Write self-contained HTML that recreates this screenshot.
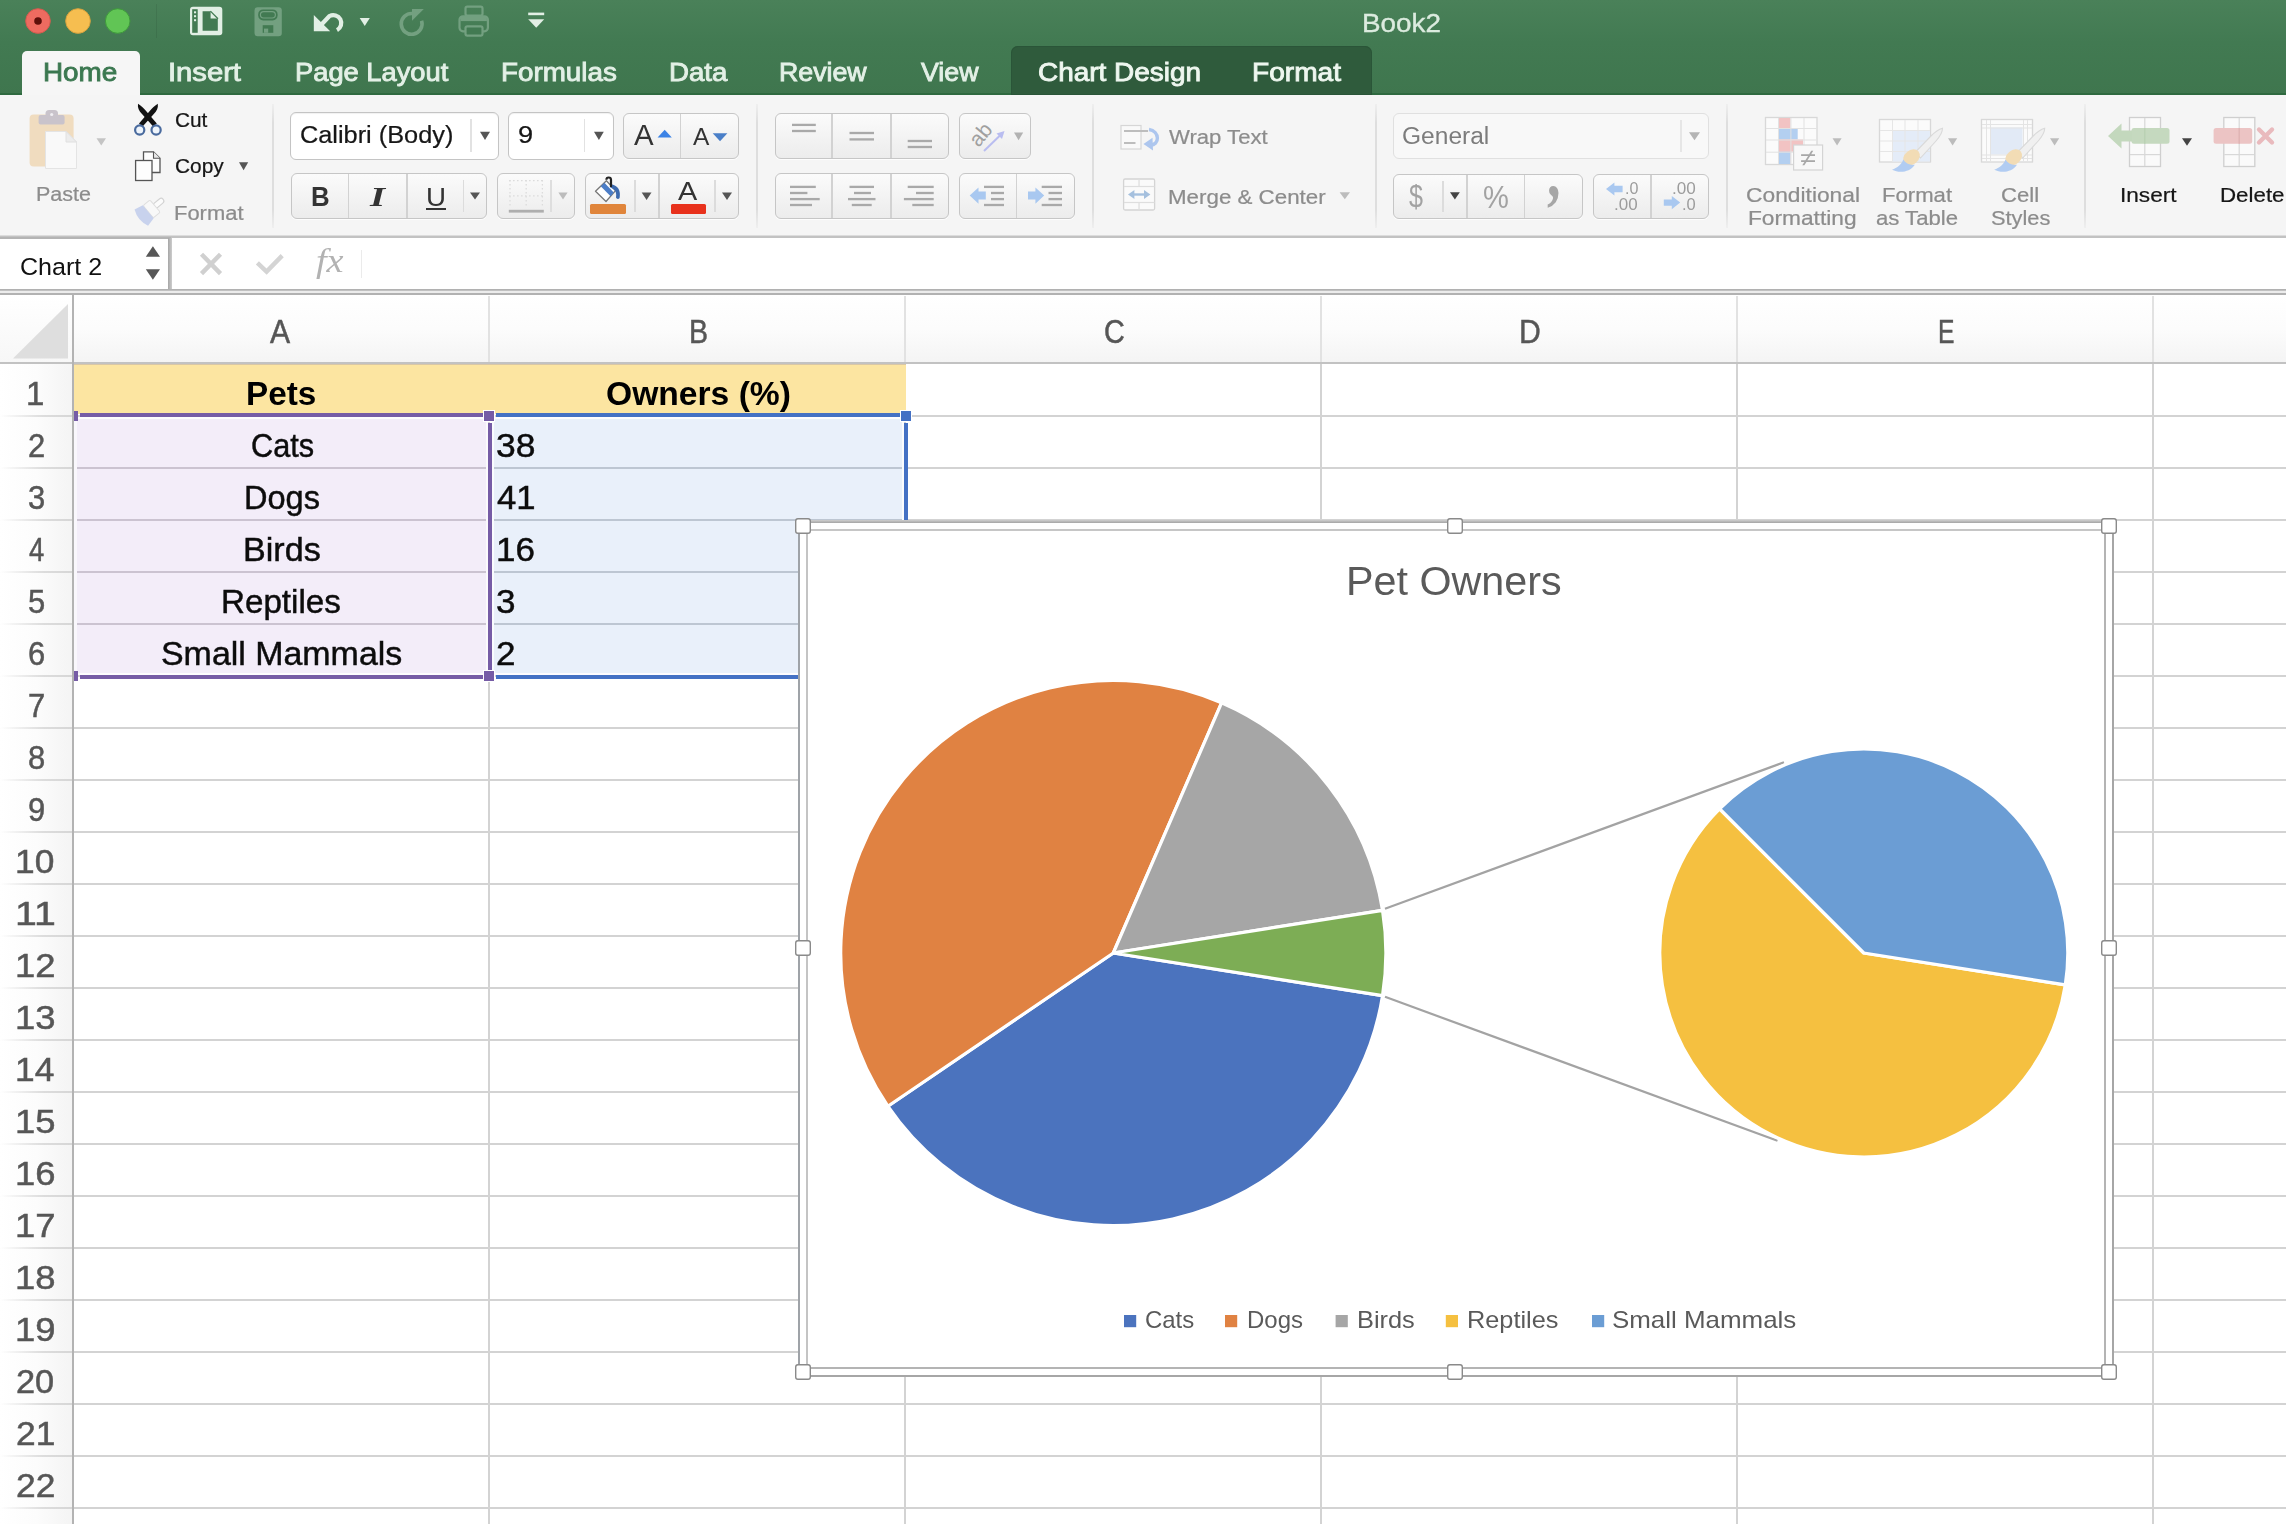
<!DOCTYPE html>
<html lang="en"><head><meta charset="utf-8"><title>Book2</title>
<style>
html,body{margin:0;padding:0}
body{width:2286px;height:1524px;position:relative;overflow:hidden;background:#fff;font-family:"Liberation Sans",sans-serif}
.t{position:absolute;white-space:nowrap;transform-origin:0 0;display:block}
.a{position:absolute}
svg{position:absolute;left:0;top:0;overflow:visible}

</style></head><body>
<div class="a" style="left:0px;top:0px;width:2286px;height:95px;background:linear-gradient(#4a8159 0,#427a52 45%,#3f764e 100%)"></div>
<div class="a" style="left:0px;top:93px;width:2286px;height:2px;background:#2f6a40"></div>
<div class="a" style="left:1011px;top:46px;width:361px;height:49px;background:#2f5b3c;border-radius:7px 7px 0 0;box-shadow:inset 0 0 0 1px #2a5538"></div>
<div class="a" style="left:22px;top:51px;width:118px;height:45px;background:#f6f6f6;border-radius:5px 5px 0 0"></div>
<div class="a" style="left:155.5px;top:4px;width:1.5px;height:34px;background:rgba(0,0,0,.08)"></div>
<div class="a" style="left:0px;top:95px;width:2286px;height:141px;background:#f5f5f5"></div>
<div class="a" style="left:0px;top:235px;width:2286px;height:1px;background:#dcdcdc"></div>
<div class="a" style="left:0px;top:236px;width:2286px;height:1.5px;background:#c2c2c2"></div>
<div class="a" style="left:271.8px;top:104px;width:2px;height:124px;background:linear-gradient(#efefef,#dedede 15%,#dedede 85%,#efefef)"></div>
<div class="a" style="left:755.5px;top:104px;width:2px;height:124px;background:linear-gradient(#efefef,#dedede 15%,#dedede 85%,#efefef)"></div>
<div class="a" style="left:1092px;top:104px;width:2px;height:124px;background:linear-gradient(#efefef,#dedede 15%,#dedede 85%,#efefef)"></div>
<div class="a" style="left:1374.6px;top:104px;width:2px;height:124px;background:linear-gradient(#efefef,#dedede 15%,#dedede 85%,#efefef)"></div>
<div class="a" style="left:1726.4px;top:104px;width:2px;height:124px;background:linear-gradient(#efefef,#dedede 15%,#dedede 85%,#efefef)"></div>
<div class="a" style="left:2083.7px;top:104px;width:2px;height:124px;background:linear-gradient(#efefef,#dedede 15%,#dedede 85%,#efefef)"></div>
<div class="a" style="left:290px;top:112px;width:209px;height:47.5px;background:#fff;border:1.5px solid #c4c4c4;border-radius:6px;box-sizing:border-box;box-shadow:inset 0 1px 1px rgba(0,0,0,.06)"></div>
<div class="a" style="left:470.25px;top:119px;width:1.5px;height:33px;background:#e2e2e2"></div>
<div class="a" style="left:508px;top:112px;width:105.5px;height:47.5px;background:#fff;border:1.5px solid #c4c4c4;border-radius:6px;box-sizing:border-box;box-shadow:inset 0 1px 1px rgba(0,0,0,.06)"></div>
<div class="a" style="left:583.95px;top:119px;width:1.5px;height:33px;background:#e2e2e2"></div>
<div class="a" style="left:623px;top:113px;width:116px;height:46px;background:linear-gradient(#fbfbfb,#ececec);border:1.5px solid #c6c6c6;border-radius:6px;box-sizing:border-box;box-shadow:0 1px 0 rgba(255,255,255,.8)"></div>
<div class="a" style="left:679.75px;top:114px;width:1.5px;height:44px;background:#d2d2d2"></div>
<div class="a" style="left:290.5px;top:173px;width:196.5px;height:46px;background:linear-gradient(#fbfbfb,#ececec);border:1.5px solid #c6c6c6;border-radius:6px;box-sizing:border-box;box-shadow:0 1px 0 rgba(255,255,255,.8)"></div>
<div class="a" style="left:347.65px;top:174px;width:1.5px;height:44px;background:#d2d2d2"></div>
<div class="a" style="left:406.45px;top:174px;width:1.5px;height:44px;background:#d2d2d2"></div>
<div class="a" style="left:462.75px;top:180px;width:1.5px;height:32px;background:#dcdcdc"></div>
<div class="a" style="left:497px;top:173px;width:77.5px;height:46px;background:linear-gradient(#fbfbfb,#ececec);border:1.5px solid #c6c6c6;border-radius:6px;box-sizing:border-box;box-shadow:0 1px 0 rgba(255,255,255,.8)"></div>
<div class="a" style="left:550.25px;top:180px;width:1.5px;height:32px;background:#dedede"></div>
<div class="a" style="left:585px;top:173px;width:154px;height:46px;background:linear-gradient(#fbfbfb,#ececec);border:1.5px solid #c6c6c6;border-radius:6px;box-sizing:border-box;box-shadow:0 1px 0 rgba(255,255,255,.8)"></div>
<div class="a" style="left:634.25px;top:180px;width:1.5px;height:32px;background:#dcdcdc"></div>
<div class="a" style="left:658.25px;top:174px;width:1.5px;height:44px;background:#d2d2d2"></div>
<div class="a" style="left:714.45px;top:180px;width:1.5px;height:32px;background:#dcdcdc"></div>
<div class="a" style="left:590px;top:204.4px;width:36px;height:9.2px;background:#e0853b;border-radius:1.5px"></div>
<div class="a" style="left:670.5px;top:204.4px;width:35.5px;height:9.2px;background:#e8311c;border-radius:1.5px"></div>
<div class="a" style="left:426px;top:207.6px;width:20px;height:2.4px;background:#333"></div>
<div class="a" style="left:775px;top:113px;width:174px;height:45.5px;background:linear-gradient(#fbfbfb,#ececec);border:1.5px solid #c6c6c6;border-radius:6px;box-sizing:border-box;box-shadow:0 1px 0 rgba(255,255,255,.8)"></div>
<div class="a" style="left:831.45px;top:114px;width:1.5px;height:43.5px;background:#d2d2d2"></div>
<div class="a" style="left:890.15px;top:114px;width:1.5px;height:43.5px;background:#d2d2d2"></div>
<div class="a" style="left:959px;top:113px;width:72px;height:45.5px;background:linear-gradient(#fbfbfb,#ececec);border:1.5px solid #c6c6c6;border-radius:6px;box-sizing:border-box;box-shadow:0 1px 0 rgba(255,255,255,.8)"></div>
<div class="a" style="left:775px;top:173px;width:174px;height:45.5px;background:linear-gradient(#fbfbfb,#ececec);border:1.5px solid #c6c6c6;border-radius:6px;box-sizing:border-box;box-shadow:0 1px 0 rgba(255,255,255,.8)"></div>
<div class="a" style="left:831.45px;top:174px;width:1.5px;height:43.5px;background:#d2d2d2"></div>
<div class="a" style="left:890.15px;top:174px;width:1.5px;height:43.5px;background:#d2d2d2"></div>
<div class="a" style="left:959px;top:173px;width:115.6px;height:45.5px;background:linear-gradient(#fbfbfb,#ececec);border:1.5px solid #c6c6c6;border-radius:6px;box-sizing:border-box;box-shadow:0 1px 0 rgba(255,255,255,.8)"></div>
<div class="a" style="left:1015.65px;top:174px;width:1.5px;height:43.5px;background:#d2d2d2"></div>
<div class="a" style="left:1392.5px;top:112.5px;width:316.5px;height:46.5px;background:#f8f8f8;border:1.5px solid #e0e0e0;border-radius:6px;box-sizing:border-box"></div>
<div class="a" style="left:1680.05px;top:120px;width:1.5px;height:32px;background:#e6e6e6"></div>
<div class="a" style="left:1392.5px;top:173.5px;width:190.5px;height:45.5px;background:linear-gradient(#fbfbfb,#ececec);border:1.5px solid #c6c6c6;border-radius:6px;box-sizing:border-box;box-shadow:0 1px 0 rgba(255,255,255,.8)"></div>
<div class="a" style="left:1466.25px;top:174.5px;width:1.5px;height:43.5px;background:#d2d2d2"></div>
<div class="a" style="left:1523.85px;top:174.5px;width:1.5px;height:43.5px;background:#d2d2d2"></div>
<div class="a" style="left:1442.05px;top:181px;width:1.5px;height:31px;background:#dcdcdc"></div>
<div class="a" style="left:1593.4px;top:173.5px;width:115.6px;height:45.5px;background:linear-gradient(#fbfbfb,#ececec);border:1.5px solid #c6c6c6;border-radius:6px;box-sizing:border-box;box-shadow:0 1px 0 rgba(255,255,255,.8)"></div>
<div class="a" style="left:1650.25px;top:174.5px;width:1.5px;height:43.5px;background:#d2d2d2"></div>
<div class="a" style="left:0px;top:237.5px;width:2286px;height:51.5px;background:#fff"></div>
<div class="a" style="left:0px;top:237px;width:171px;height:1.6px;background:#b4b4b4"></div>
<div class="a" style="left:168px;top:238px;width:3.6px;height:51px;background:linear-gradient(90deg,#a6a6a6,#cdcdcd)"></div>
<div class="a" style="left:360.6px;top:249.5px;width:1.8px;height:28.5px;background:#ebebeb"></div>
<div class="a" style="left:0px;top:288.8px;width:2286px;height:2px;background:linear-gradient(#a9a9a9,#c9c9c9)"></div>
<div class="a" style="left:0px;top:290.8px;width:2286px;height:2.4px;background:#ececec"></div>
<div class="a" style="left:0px;top:293.2px;width:2286px;height:1.8px;background:#b2b2b2"></div>
<div class="a" style="left:0px;top:295px;width:2286px;height:68px;background:linear-gradient(#ffffff 0,#fcfcfc 50%,#f4f4f4 100%)"></div>
<div class="a" style="left:0px;top:363px;width:73px;height:1161px;background:linear-gradient(90deg,#ffffff 0,#fcfcfc 50%,#f4f4f4 100%)"></div>
<div class="a" style="left:0px;top:295px;width:73px;height:68px;background:linear-gradient(#fff,#f7f7f7)"></div>
<svg width="80" height="70" style="left:0;top:295px"><polygon points="68,9 68,63.5 13,63.5" fill="#dedede"/></svg>
<div class="a" style="left:488px;top:296px;width:2px;height:66px;background:#e2e2e2"></div>
<div class="a" style="left:488px;top:364px;width:2px;height:1160px;background:#d3d3d3"></div>
<div class="a" style="left:904px;top:296px;width:2px;height:66px;background:#e2e2e2"></div>
<div class="a" style="left:904px;top:364px;width:2px;height:1160px;background:#d3d3d3"></div>
<div class="a" style="left:1320px;top:296px;width:2px;height:66px;background:#e2e2e2"></div>
<div class="a" style="left:1320px;top:364px;width:2px;height:1160px;background:#d3d3d3"></div>
<div class="a" style="left:1736px;top:296px;width:2px;height:66px;background:#e2e2e2"></div>
<div class="a" style="left:1736px;top:364px;width:2px;height:1160px;background:#d3d3d3"></div>
<div class="a" style="left:2152px;top:296px;width:2px;height:66px;background:#e2e2e2"></div>
<div class="a" style="left:2152px;top:364px;width:2px;height:1160px;background:#d3d3d3"></div>
<div class="a" style="left:73px;top:415px;width:2213px;height:2px;background:#d3d3d3"></div>
<div class="a" style="left:0px;top:415px;width:73px;height:2px;background:linear-gradient(90deg,rgba(225,225,225,0),#dcdcdc 60%,#d6d6d6)"></div>
<div class="a" style="left:73px;top:467px;width:2213px;height:2px;background:#d3d3d3"></div>
<div class="a" style="left:0px;top:467px;width:73px;height:2px;background:linear-gradient(90deg,rgba(225,225,225,0),#dcdcdc 60%,#d6d6d6)"></div>
<div class="a" style="left:73px;top:519px;width:2213px;height:2px;background:#d3d3d3"></div>
<div class="a" style="left:0px;top:519px;width:73px;height:2px;background:linear-gradient(90deg,rgba(225,225,225,0),#dcdcdc 60%,#d6d6d6)"></div>
<div class="a" style="left:73px;top:571px;width:2213px;height:2px;background:#d3d3d3"></div>
<div class="a" style="left:0px;top:571px;width:73px;height:2px;background:linear-gradient(90deg,rgba(225,225,225,0),#dcdcdc 60%,#d6d6d6)"></div>
<div class="a" style="left:73px;top:623px;width:2213px;height:2px;background:#d3d3d3"></div>
<div class="a" style="left:0px;top:623px;width:73px;height:2px;background:linear-gradient(90deg,rgba(225,225,225,0),#dcdcdc 60%,#d6d6d6)"></div>
<div class="a" style="left:73px;top:675px;width:2213px;height:2px;background:#d3d3d3"></div>
<div class="a" style="left:0px;top:675px;width:73px;height:2px;background:linear-gradient(90deg,rgba(225,225,225,0),#dcdcdc 60%,#d6d6d6)"></div>
<div class="a" style="left:73px;top:727px;width:2213px;height:2px;background:#d3d3d3"></div>
<div class="a" style="left:0px;top:727px;width:73px;height:2px;background:linear-gradient(90deg,rgba(225,225,225,0),#dcdcdc 60%,#d6d6d6)"></div>
<div class="a" style="left:73px;top:779px;width:2213px;height:2px;background:#d3d3d3"></div>
<div class="a" style="left:0px;top:779px;width:73px;height:2px;background:linear-gradient(90deg,rgba(225,225,225,0),#dcdcdc 60%,#d6d6d6)"></div>
<div class="a" style="left:73px;top:831px;width:2213px;height:2px;background:#d3d3d3"></div>
<div class="a" style="left:0px;top:831px;width:73px;height:2px;background:linear-gradient(90deg,rgba(225,225,225,0),#dcdcdc 60%,#d6d6d6)"></div>
<div class="a" style="left:73px;top:883px;width:2213px;height:2px;background:#d3d3d3"></div>
<div class="a" style="left:0px;top:883px;width:73px;height:2px;background:linear-gradient(90deg,rgba(225,225,225,0),#dcdcdc 60%,#d6d6d6)"></div>
<div class="a" style="left:73px;top:935px;width:2213px;height:2px;background:#d3d3d3"></div>
<div class="a" style="left:0px;top:935px;width:73px;height:2px;background:linear-gradient(90deg,rgba(225,225,225,0),#dcdcdc 60%,#d6d6d6)"></div>
<div class="a" style="left:73px;top:987px;width:2213px;height:2px;background:#d3d3d3"></div>
<div class="a" style="left:0px;top:987px;width:73px;height:2px;background:linear-gradient(90deg,rgba(225,225,225,0),#dcdcdc 60%,#d6d6d6)"></div>
<div class="a" style="left:73px;top:1039px;width:2213px;height:2px;background:#d3d3d3"></div>
<div class="a" style="left:0px;top:1039px;width:73px;height:2px;background:linear-gradient(90deg,rgba(225,225,225,0),#dcdcdc 60%,#d6d6d6)"></div>
<div class="a" style="left:73px;top:1091px;width:2213px;height:2px;background:#d3d3d3"></div>
<div class="a" style="left:0px;top:1091px;width:73px;height:2px;background:linear-gradient(90deg,rgba(225,225,225,0),#dcdcdc 60%,#d6d6d6)"></div>
<div class="a" style="left:73px;top:1143px;width:2213px;height:2px;background:#d3d3d3"></div>
<div class="a" style="left:0px;top:1143px;width:73px;height:2px;background:linear-gradient(90deg,rgba(225,225,225,0),#dcdcdc 60%,#d6d6d6)"></div>
<div class="a" style="left:73px;top:1195px;width:2213px;height:2px;background:#d3d3d3"></div>
<div class="a" style="left:0px;top:1195px;width:73px;height:2px;background:linear-gradient(90deg,rgba(225,225,225,0),#dcdcdc 60%,#d6d6d6)"></div>
<div class="a" style="left:73px;top:1247px;width:2213px;height:2px;background:#d3d3d3"></div>
<div class="a" style="left:0px;top:1247px;width:73px;height:2px;background:linear-gradient(90deg,rgba(225,225,225,0),#dcdcdc 60%,#d6d6d6)"></div>
<div class="a" style="left:73px;top:1299px;width:2213px;height:2px;background:#d3d3d3"></div>
<div class="a" style="left:0px;top:1299px;width:73px;height:2px;background:linear-gradient(90deg,rgba(225,225,225,0),#dcdcdc 60%,#d6d6d6)"></div>
<div class="a" style="left:73px;top:1351px;width:2213px;height:2px;background:#d3d3d3"></div>
<div class="a" style="left:0px;top:1351px;width:73px;height:2px;background:linear-gradient(90deg,rgba(225,225,225,0),#dcdcdc 60%,#d6d6d6)"></div>
<div class="a" style="left:73px;top:1403px;width:2213px;height:2px;background:#d3d3d3"></div>
<div class="a" style="left:0px;top:1403px;width:73px;height:2px;background:linear-gradient(90deg,rgba(225,225,225,0),#dcdcdc 60%,#d6d6d6)"></div>
<div class="a" style="left:73px;top:1455px;width:2213px;height:2px;background:#d3d3d3"></div>
<div class="a" style="left:0px;top:1455px;width:73px;height:2px;background:linear-gradient(90deg,rgba(225,225,225,0),#dcdcdc 60%,#d6d6d6)"></div>
<div class="a" style="left:73px;top:1507px;width:2213px;height:2px;background:#d3d3d3"></div>
<div class="a" style="left:0px;top:1507px;width:73px;height:2px;background:linear-gradient(90deg,rgba(225,225,225,0),#dcdcdc 60%,#d6d6d6)"></div>
<div class="a" style="left:0px;top:362px;width:2286px;height:2px;background:#c2c2c2"></div>
<div class="a" style="left:72px;top:295px;width:2px;height:1229px;background:#b3b3b3"></div>
<div class="a" style="left:74px;top:364px;width:832px;height:49.5px;background:#fce5a1"></div>
<div class="a" style="left:74px;top:364px;width:832px;height:1px;background:#d9c7a6"></div>
<div class="a" style="left:74px;top:417px;width:414px;height:258px;background:#f3edf9"></div>
<div class="a" style="left:492px;top:417px;width:412px;height:258px;background:#e9f0fa"></div>
<div class="a" style="left:74px;top:467px;width:414px;height:2px;background:#cbc3d1"></div>
<div class="a" style="left:492px;top:467px;width:412px;height:2px;background:#bdc6d2"></div>
<div class="a" style="left:74px;top:519px;width:414px;height:2px;background:#cbc3d1"></div>
<div class="a" style="left:492px;top:519px;width:412px;height:2px;background:#bdc6d2"></div>
<div class="a" style="left:74px;top:571px;width:414px;height:2px;background:#cbc3d1"></div>
<div class="a" style="left:492px;top:571px;width:412px;height:2px;background:#bdc6d2"></div>
<div class="a" style="left:74px;top:623px;width:414px;height:2px;background:#cbc3d1"></div>
<div class="a" style="left:492px;top:623px;width:412px;height:2px;background:#bdc6d2"></div>
<div class="a" style="left:74px;top:417px;width:830px;height:1.8px;background:#fdfcfe"></div>
<div class="a" style="left:74px;top:673.2px;width:724px;height:1.8px;background:#fdfcfe"></div>
<div class="a" style="left:74px;top:417px;width:3px;height:258px;background:#f9f7fc"></div>
<div class="a" style="left:486.4px;top:419px;width:1.6px;height:254px;background:#fbfafd"></div>
<div class="a" style="left:492px;top:419px;width:1.6px;height:254px;background:#fafcfe"></div>
<div class="a" style="left:902.4px;top:419px;width:1.6px;height:101px;background:#fafcfe"></div>
<div class="a" style="left:80px;top:413px;width:403px;height:4px;background:#765ca6"></div>
<div class="a" style="left:80px;top:675px;width:403px;height:3.8px;background:#765ca6"></div>
<div class="a" style="left:488px;top:423px;width:4px;height:247px;background:#765ca6"></div>
<div class="a" style="left:74px;top:411px;width:4px;height:10px;background:#765ca6"></div>
<div class="a" style="left:74px;top:671px;width:4px;height:10px;background:#765ca6"></div>
<div class="a" style="left:483px;top:410px;width:12px;height:12px;background:#fff"></div>
<div class="a" style="left:484px;top:411px;width:10px;height:10px;background:#765ca6"></div>
<div class="a" style="left:483px;top:670px;width:12px;height:12px;background:#fff"></div>
<div class="a" style="left:484px;top:671px;width:10px;height:10px;background:#765ca6"></div>
<div class="a" style="left:496px;top:413px;width:404px;height:4px;background:#4471c4"></div>
<div class="a" style="left:496px;top:675px;width:302px;height:3.8px;background:#4471c4"></div>
<div class="a" style="left:904px;top:423px;width:4px;height:97.5px;background:#4471c4"></div>
<div class="a" style="left:900px;top:410px;width:12px;height:12px;background:#fff"></div>
<div class="a" style="left:901px;top:411px;width:10px;height:10px;background:#4471c4"></div>
<div class="a" style="left:799px;top:521px;width:1314px;height:855px;background:#fff"></div>
<div class="a" style="left:798px;top:519.5px;width:1316px;height:3.2px;background:linear-gradient(#cfcfcf,#a4a4a4)"></div>
<div class="a" style="left:798px;top:1374.6px;width:1316px;height:2.4px;background:#a6a6a6"></div>
<div class="a" style="left:798px;top:521px;width:2.2px;height:855px;background:#9fa3a8"></div>
<div class="a" style="left:2111.9px;top:521px;width:2.2px;height:855px;background:#a6a6a6"></div>
<div class="a" style="left:806px;top:529.2px;width:1300px;height:1.8px;background:#c6c6c6"></div>
<div class="a" style="left:806px;top:1367px;width:1300px;height:1.9px;background:#b4b4b4"></div>
<div class="a" style="left:806px;top:530px;width:1.9px;height:838px;background:#c4c4c4"></div>
<div class="a" style="left:2104px;top:530px;width:1.9px;height:838px;background:#b4b4b4"></div>
<svg width="2286" height="1524" viewBox="0 0 2286 1524">
<line x1="1385" y1="908.8" x2="1784" y2="762.3" stroke="#a3a3a3" stroke-width="2.2"/>
<line x1="1385" y1="996.8" x2="1777.5" y2="1140.8" stroke="#a3a3a3" stroke-width="2.2"/>
<path d="M1113.30 953.00 L1382.54 995.64 A272.60 272.60 0 0 1 887.84 1106.22 Z" fill="#4b73be" stroke="#fff" stroke-width="3.2" stroke-linejoin="round"/>
<path d="M1113.30 953.00 L887.84 1106.22 A272.60 272.60 0 0 1 1221.56 702.82 Z" fill="#e08242" stroke="#fff" stroke-width="3.2" stroke-linejoin="round"/>
<path d="M1113.30 953.00 L1221.56 702.82 A272.60 272.60 0 0 1 1382.54 910.36 Z" fill="#a6a6a6" stroke="#fff" stroke-width="3.2" stroke-linejoin="round"/>
<path d="M1113.30 953.00 L1382.54 910.36 A272.60 272.60 0 0 1 1382.54 995.64 Z" fill="#7dad55" stroke="#fff" stroke-width="3.2" stroke-linejoin="round"/>
<path d="M1863.80 953.00 L2065.29 984.91 A204.00 204.00 0 1 1 1719.55 808.75 Z" fill="#f5c040" stroke="#fff" stroke-width="3.2" stroke-linejoin="round"/>
<path d="M1863.80 953.00 L1719.55 808.75 A204.00 204.00 0 0 1 2065.29 984.91 Z" fill="#6b9dd4" stroke="#fff" stroke-width="3.2" stroke-linejoin="round"/>
<rect x="1124" y="1315" width="12.2" height="12.2" fill="#4b73be"/>
<rect x="1225" y="1315" width="12.2" height="12.2" fill="#e08242"/>
<rect x="1335.6" y="1315" width="12.2" height="12.2" fill="#a6a6a6"/>
<rect x="1445.8" y="1315" width="12.2" height="12.2" fill="#f5c040"/>
<rect x="1592" y="1315" width="12.2" height="12.2" fill="#6b9dd4"/>
<rect x="795.7" y="518.7" width="14.6" height="14.6" rx="2.2" fill="#fff" stroke="#8a8a8a" stroke-width="1.4"/>
<rect x="1447.7" y="518.7" width="14.6" height="14.6" rx="2.2" fill="#fff" stroke="#8a8a8a" stroke-width="1.4"/>
<rect x="2101.7" y="518.7" width="14.6" height="14.6" rx="2.2" fill="#fff" stroke="#8a8a8a" stroke-width="1.4"/>
<rect x="795.7" y="940.7" width="14.6" height="14.6" rx="2.2" fill="#fff" stroke="#8a8a8a" stroke-width="1.4"/>
<rect x="2101.7" y="940.7" width="14.6" height="14.6" rx="2.2" fill="#fff" stroke="#8a8a8a" stroke-width="1.4"/>
<rect x="795.7" y="1364.7" width="14.6" height="14.6" rx="2.2" fill="#fff" stroke="#8a8a8a" stroke-width="1.4"/>
<rect x="1447.7" y="1364.7" width="14.6" height="14.6" rx="2.2" fill="#fff" stroke="#8a8a8a" stroke-width="1.4"/>
<rect x="2101.7" y="1364.7" width="14.6" height="14.6" rx="2.2" fill="#fff" stroke="#8a8a8a" stroke-width="1.4"/>
</svg>
<svg width="2286" height="300" viewBox="0 0 2286 300">
<circle cx="38" cy="21" r="12.3" fill="#ee6b60" stroke="#d55a4e" stroke-width="1"/><circle cx="38" cy="21" r="3.8" fill="#5e0f0a"/>
<circle cx="78" cy="21" r="12.3" fill="#f6be50" stroke="#d8a23e" stroke-width="1"/>
<circle cx="117.7" cy="21" r="12.3" fill="#61c555" stroke="#3f9a3c" stroke-width="1"/>
<rect x="190" y="6.8" width="32.3" height="28.4" rx="3" fill="#e2efe5"/>
<rect x="192.2" y="9.2" width="5.5" height="23.6" fill="#427a52"/>
<rect x="194" y="11.3" width="2.1" height="2" fill="#e2efe5"/>
<rect x="194" y="15.2" width="2.1" height="2" fill="#e2efe5"/>
<rect x="194" y="19.2" width="2.1" height="2" fill="#e2efe5"/>
<path d="M202.6 11.3 H210.6 V18.5 H217.8 V30.7 H202.6 Z" fill="#427a52"/>
<path d="M210.4 11.1 L218 18.7" stroke="#427a52" stroke-width="1.3"/>
<rect x="254.5" y="7.3" width="27.3" height="28.9" rx="3.2" fill="#73a080"/>
<rect x="258.2" y="9.4" width="19.4" height="11" rx="5" fill="#427a52"/>
<rect x="260.4" y="11.6" width="15" height="6.4" rx="3.2" fill="none" stroke="#73a080" stroke-width="1.2"/>
<rect x="262.7" y="25.2" width="10.6" height="7.6" fill="#427a52"/><rect x="264" y="28.6" width="4.2" height="4.2" fill="#73a080"/>
<polygon points="313.8,15 313.8,31.3 330.2,31.3" fill="#e2efe5"/>
<path d="M321.5 24.5 L329.5 16 A7.6 7.6 0 1 1 337 30.2" fill="none" stroke="#e2efe5" stroke-width="4.2"/>
<polygon points="359.7,18 369.8,18 364.75,25.9" fill="#e2efe5"/>
<path d="M412.5 13.5 A10.4 10.4 0 1 0 421.6 20.8" fill="none" stroke="#73a080" stroke-width="3.6"/>
<polygon points="412,9 423.8,9 412,20.8" fill="#73a080"/>
<rect x="465.5" y="6.6" width="17" height="9" rx="1.8" fill="none" stroke="#73a080" stroke-width="2.2"/>
<rect x="459.5" y="16.3" width="28.4" height="15" rx="3.5" fill="none" stroke="#73a080" stroke-width="2.2"/>
<rect x="460.5" y="16.3" width="26.4" height="4.8" fill="#73a080"/>
<rect x="465.5" y="26.3" width="17" height="9.3" rx="1.8" fill="#427a52" stroke="#73a080" stroke-width="2.2"/>
<rect x="528.2" y="12.6" width="16" height="2.6" fill="#e2efe5"/><polygon points="528.2,19.2 544.2,19.2 536.2,27.8" fill="#e2efe5"/>
<rect x="29.6" y="114.5" width="44" height="52" rx="4" fill="#f0dcbf"/>
<rect x="38.6" y="115" width="26" height="9.5" rx="2" fill="#c9c3cb"/><rect x="45.5" y="110" width="12.5" height="8" rx="3.5" fill="#c9c3cb"/><circle cx="51.7" cy="114.5" r="1.6" fill="#f0eef2"/>
<path d="M45.5 131.5 H66 L76.5 142 V168.5 H45.5 Z" fill="#f9f9f9" stroke="#e4e4e4" stroke-width="1"/><path d="M66 131.5 V142 H76.5 Z" fill="#ececec" stroke="#e0e0e0" stroke-width="1"/>
<polygon points="96.5,138.3 106,138.3 101.25,145.5" fill="#c4c4c4"/>
<path d="M138 103.8 C137.4 108 139 111 142 114 L153.2 126.6 L156.8 123.6 L146.5 111.5 C143.8 108.3 141.5 106 138 103.8 Z" fill="#111"/>
<path d="M157.8 103.8 C158.4 108 156.8 111 153.8 114 L142.6 126.6 L139 123.6 L149.3 111.5 C152 108.3 154.3 106 157.8 103.8 Z" fill="#111"/>
<circle cx="139.7" cy="130" r="4.6" fill="#eef4fb" stroke="#4a6b9e" stroke-width="2.2"/><circle cx="156.1" cy="130" r="4.6" fill="#eef4fb" stroke="#4a6b9e" stroke-width="2.2"/>
<path d="M143.5 151.8 H153.5 L160 158.3 V172.5 H143.5 Z" fill="#fdfdfd" stroke="#555" stroke-width="1.3"/><path d="M153.5 151.8 V158.3 H160" fill="#e8e8e8" stroke="#555" stroke-width="1.1"/>
<rect x="135.6" y="160.5" width="16.4" height="20" fill="#fdfdfd" stroke="#555" stroke-width="1.3"/>
<polygon points="239,162.2 248.2,162.2 243.6,170.3" fill="#555"/>
<g transform="translate(148.6 211.5) rotate(50)"><rect x="-2.7" y="-19" width="5.4" height="12" rx="2.7" fill="#fbfbfb" stroke="#d2d2d2" stroke-width="1.1"/><rect x="-8" y="-8.5" width="16" height="9" rx="1.5" fill="#f8f8f8" stroke="#dedede" stroke-width="1"/><path d="M-8.5 0.5 H8.5 L10.5 9.5 Q0 14.5 -10.5 9.5 Z" fill="#c8d2ed"/></g>
<polygon points="480,131.7 490,131.7 485,139.9" fill="#555"/>
<polygon points="594,131.7 603.8,131.7 598.9,139.9" fill="#555"/>
<polygon points="470,192.4 480,192.4 475,199.6" fill="#555"/>
<polygon points="558.4,192.4 567.6,192.4 563,199.6" fill="#bcbcbc"/>
<polygon points="641.7,192.4 651.5,192.4 646.6,200" fill="#555"/>
<polygon points="722,192.4 732,192.4 727,200" fill="#555"/>
<polygon points="657.6,137.6 671.8,137.6 664.7,129.8" fill="#3c83e6"/>
<polygon points="712.7,133.2 727.4,133.2 720.05,141.2" fill="#4a7fc8"/>
<g stroke="#dcdcdc" stroke-width="1.3" stroke-dasharray="1.6 2.4"><line x1="510" y1="180" x2="510" y2="208"/><line x1="526.2" y1="180" x2="526.2" y2="208"/><line x1="542.4" y1="180" x2="542.4" y2="208"/><line x1="509" y1="180.6" x2="543.4" y2="180.6"/><line x1="509" y1="195.8" x2="543.4" y2="195.8"/></g><rect x="508.8" y="209.8" width="35" height="2.8" fill="#aeaeae"/>
<polygon points="595.5,191.3 606.4,180.8 615.5,190.6 606,201.5" fill="#fff" stroke="#777" stroke-width="1.3" stroke-linejoin="round"/>
<polygon points="604.4,182.7 613.8,192.6 610.6,196.3 600.7,186.3" fill="#4c7dc6"/>
<path d="M611.5 184.2 C618 185.5 621 190.5 619.6 198 C618.6 199.4 616.6 199.2 616 197.6 C616.8 192.6 615.6 189.8 610 187.2 Z" fill="#3d6aae"/>
<path d="M611 187 V179.8 a2.3 2.3 0 1 0 -4.6 0" fill="none" stroke="#222" stroke-width="2.2"/>
<rect x="792" y="123.75" width="23.8" height="2.3" fill="#a9a9a9"/>
<rect x="792" y="129.85" width="23.8" height="2.3" fill="#a9a9a9"/>
<rect x="849.5" y="131.85" width="24.5" height="2.3" fill="#a9a9a9"/>
<rect x="849.5" y="138.25" width="24.5" height="2.3" fill="#a9a9a9"/>
<rect x="907.7" y="139.85" width="24.3" height="2.3" fill="#a9a9a9"/>
<rect x="907.7" y="145.85" width="24.3" height="2.3" fill="#a9a9a9"/>
<rect x="790" y="185.75" width="25.8" height="2.3" fill="#a9a9a9"/>
<rect x="790" y="191.85" width="17.4" height="2.3" fill="#a9a9a9"/>
<rect x="790" y="197.95" width="29.7" height="2.3" fill="#a9a9a9"/>
<rect x="790" y="203.85" width="22" height="2.3" fill="#a9a9a9"/>
<rect x="849.5" y="185.75" width="24.5" height="2.3" fill="#a9a9a9"/>
<rect x="854" y="191.85" width="17" height="2.3" fill="#a9a9a9"/>
<rect x="848" y="197.95" width="27.5" height="2.3" fill="#a9a9a9"/>
<rect x="851.8" y="203.85" width="19.9" height="2.3" fill="#a9a9a9"/>
<rect x="907.7" y="185.75" width="26" height="2.3" fill="#a9a9a9"/>
<rect x="916" y="191.85" width="17.7" height="2.3" fill="#a9a9a9"/>
<rect x="903.9" y="197.95" width="29.8" height="2.3" fill="#a9a9a9"/>
<rect x="912.3" y="203.85" width="21.4" height="2.3" fill="#a9a9a9"/>
<text x="0" y="0" transform="translate(978.5 148) rotate(-50)" font-family="Liberation Sans,sans-serif" font-size="21" fill="#a0a0a0">ab</text>
<path d="M984 151 L1001 134.5" stroke="#b9bdf0" stroke-width="2" fill="none"/><polygon points="1004.5,131 996.5,133.5 1002,139" fill="#b9bdf0"/>
<polygon points="1014,132.6 1023.2,132.6 1018.6,140.2" fill="#b2b2b2"/>
<polygon points="969.7,195.6 978.5,187.4 978.5,191.6 985.8,191.6 985.8,199.6 978.5,199.6 978.5,203.8" fill="#a9c8f0"/>
<rect x="984" y="185.75" width="20" height="2.3" fill="#a9a9a9"/>
<rect x="991" y="191.85" width="13" height="2.3" fill="#a9a9a9"/>
<rect x="991" y="197.95" width="13" height="2.3" fill="#a9a9a9"/>
<rect x="984" y="203.85" width="20" height="2.3" fill="#a9a9a9"/>
<polygon points="1044.2,195.6 1035.4,187.4 1035.4,191.6 1028,191.6 1028,199.6 1035.4,199.6 1035.4,203.8" fill="#a9c8f0"/>
<rect x="1041.7" y="185.75" width="20.3" height="2.3" fill="#a9a9a9"/>
<rect x="1048.5" y="191.85" width="13.5" height="2.3" fill="#a9a9a9"/>
<rect x="1048.5" y="197.95" width="13.5" height="2.3" fill="#a9a9a9"/>
<rect x="1041.7" y="203.85" width="20.3" height="2.3" fill="#a9a9a9"/>
<rect x="1121" y="125.5" width="20" height="23.5" fill="#f9f9f9" stroke="#d6d6d6" stroke-width="1.2"/>
<rect x="1124" y="130" width="24" height="2" fill="#bdbdbd"/>
<rect x="1124" y="142" width="11.5" height="2" fill="#bdbdbd"/>
<path d="M1149 129.5 C1160 131 1160 145.5 1150 145" fill="none" stroke="#adc6ee" stroke-width="3.4"/><polygon points="1143.5,144 1152.5,137.8 1153,150.6" fill="#adc6ee"/>
<rect x="1123.6" y="179" width="31" height="31" rx="1.5" fill="#fafafa" stroke="#d4d4d4" stroke-width="1.3"/>
<rect x="1124" y="185.9" width="30.5" height="1.2" fill="#dedede"/>
<rect x="1124" y="201.9" width="30.5" height="1.2" fill="#dedede"/>
<rect x="1138.4" y="179" width="1.3" height="7.5" fill="#dedede"/><rect x="1138.4" y="202.5" width="1.3" height="7.5" fill="#dedede"/>
<path d="M1132 194.5 H1147" stroke="#a5c0de" stroke-width="2.4"/><polygon points="1128,194.5 1134.4,190 1134.4,199" fill="#a5c0de"/><polygon points="1150.4,194.5 1144,190 1144,199" fill="#a5c0de"/>
<polygon points="1339.6,192.2 1350,192.2 1344.8,199.2" fill="#bcbcbc"/>
<polygon points="1689,132.2 1700,132.2 1694.5,140.2" fill="#b4b4b4"/>
<polygon points="1450,192.2 1459.8,192.2 1454.9,199.6" fill="#444"/>
<polygon points="1606,189 1614.4,182.4 1614.4,185.8 1622.6,185.8 1622.6,192.2 1614.4,192.2 1614.4,195.6" fill="#a9c8f0"/>
<polygon points="1680.2,202.6 1671.8,196 1671.8,199.4 1663.8,199.4 1663.8,205.8 1671.8,205.8 1671.8,209.2" fill="#a9c8f0"/>
<rect x="1765.5" y="117.5" width="51.5" height="47" fill="#fbfbfb" stroke="#d8d8d8" stroke-width="1.3"/><rect x="1778" y="118" width="12.4" height="46" fill="#f2c3c3"/><rect x="1778" y="128" width="19.7" height="11.5" fill="#b3cff0"/><rect x="1778" y="139.5" width="25" height="12.2" fill="#f2c3c3"/><rect x="1778" y="151.7" width="12.4" height="12.3" fill="#b3cff0"/><rect x="1778" y="118" width="1" height="46" fill="#e2e2e2"/><rect x="1790.4" y="118" width="1" height="46" fill="#e2e2e2"/><rect x="1803.5" y="118" width="1" height="46" fill="#e2e2e2"/><rect x="1766" y="128" width="50.5" height="1" fill="#e2e2e2"/><rect x="1766" y="139.5" width="50.5" height="1" fill="#e2e2e2"/><rect x="1766" y="151.7" width="50.5" height="1" fill="#e2e2e2"/><rect x="1793.6" y="145" width="29" height="25" fill="#f8f8f8" stroke="#d4d4d4" stroke-width="1.2"/>
<polygon points="1832.5,138.2 1841.6,138.2 1837.05,145.4" fill="#bcbcbc"/>
<polygon points="1948,138.2 1957.2,138.2 1952.6,145.4" fill="#bcbcbc"/>
<polygon points="2050,138.2 2059.2,138.2 2054.6,145.4" fill="#bcbcbc"/>
<rect x="1879.5" y="119.5" width="51" height="42.5" fill="#fbfbfb" stroke="#d8d8d8" stroke-width="1.3"/><rect x="1892" y="130" width="38" height="31.5" fill="#e4ecf8"/><rect x="1892" y="120" width="1" height="41.5" fill="#e6e6e6"/><rect x="1904.5" y="120" width="1" height="41.5" fill="#e6e6e6"/><rect x="1917.5" y="120" width="1" height="41.5" fill="#e6e6e6"/><rect x="1880" y="130" width="50" height="1" fill="#e6e6e6"/><rect x="1880" y="140.5" width="50" height="1" fill="#e6e6e6"/><rect x="1880" y="151" width="50" height="1" fill="#e6e6e6"/>
<g transform="translate(0 0)"><path d="M1942.5 128.3 C1938.5 129.5 1934.5 132.5 1931 136 L1915 152.5 L1920.5 158 L1936 141 C1939.5 137 1942.5 132.5 1942.5 128.3 Z" fill="#f0f0f0" stroke="#d9d9d9" stroke-width="1.1"/><ellipse cx="1911.5" cy="157.3" rx="9.2" ry="7" transform="rotate(-40 1911.5 157.3)" fill="#f2dcb5"/><path d="M1903.2 159.5 C1902 164 1897 168 1892 169.8 C1899 173.2 1909.5 172.8 1914.8 164.8 C1910 165.5 1905.5 163.5 1903.2 159.5 Z" fill="#b1ccf2"/></g>
<rect x="1981.5" y="119.5" width="51" height="42.5" fill="#fbfbfb" stroke="#d8d8d8" stroke-width="1.3"/><rect x="1990.5" y="127.5" width="32" height="27" fill="#e2eaf6"/><rect x="1986" y="120" width="1" height="41.5" fill="#e4e4e4"/><rect x="1990" y="120" width="1" height="41.5" fill="#e4e4e4"/><rect x="2023" y="120" width="1" height="41.5" fill="#e4e4e4"/><rect x="2027" y="120" width="1" height="41.5" fill="#e4e4e4"/><rect x="1982" y="124" width="50" height="1" fill="#e4e4e4"/><rect x="1982" y="127.5" width="50" height="1" fill="#e4e4e4"/><rect x="1982" y="154.5" width="50" height="1" fill="#e4e4e4"/><rect x="1982" y="158" width="50" height="1" fill="#e4e4e4"/>
<g transform="translate(102.2 0)"><path d="M1942.5 128.3 C1938.5 129.5 1934.5 132.5 1931 136 L1915 152.5 L1920.5 158 L1936 141 C1939.5 137 1942.5 132.5 1942.5 128.3 Z" fill="#f0f0f0" stroke="#d9d9d9" stroke-width="1.1"/><ellipse cx="1911.5" cy="157.3" rx="9.2" ry="7" transform="rotate(-40 1911.5 157.3)" fill="#f2dcb5"/><path d="M1903.2 159.5 C1902 164 1897 168 1892 169.8 C1899 173.2 1909.5 172.8 1914.8 164.8 C1910 165.5 1905.5 163.5 1903.2 159.5 Z" fill="#b1ccf2"/></g>
<rect x="2129.5" y="117.5" width="31" height="49" fill="#fafafa" stroke="#cfcfcf" stroke-width="1.3"/><rect x="2144.2" y="118" width="1.2" height="48" fill="#d8d8d8"/><rect x="2130" y="154" width="30" height="1.2" fill="#d8d8d8"/><rect x="2131.5" y="128" width="38" height="15.8" rx="2.5" fill="#c5d9bf"/><polygon points="2108,136 2121.5,123.6 2121.5,130.5 2132,130.5 2132,141.5 2121.5,141.5 2121.5,148.4" fill="#c3d8bd"/><rect x="2144.2" y="128" width="1.2" height="15.8" fill="#b7cfb1"/>
<polygon points="2182,138.2 2192,138.2 2187,145.8" fill="#444"/>
<rect x="2223.8" y="117.5" width="31" height="49" fill="#fafafa" stroke="#cfcfcf" stroke-width="1.3"/><rect x="2238.6" y="118" width="1.2" height="48" fill="#d8d8d8"/><rect x="2224.3" y="154" width="30" height="1.2" fill="#d8d8d8"/><rect x="2213.6" y="128" width="38.6" height="15.8" rx="2.5" fill="#ecc4c4"/><rect x="2238.6" y="128" width="1.2" height="15.8" fill="#ddb0b0"/><path d="M2259 129.5 L2272 142.5 M2272 129.5 L2259 142.5" stroke="#e9babd" stroke-width="4.4" stroke-linecap="round"/>
<polygon points="145.8,256.7 160,256.7 152.9,246.3" fill="#575757"/><polygon points="145.8,269.2 160,269.2 152.9,279.7" fill="#575757"/>
<path d="M201.5 254.2 L220.5 273.6 M220.5 254.2 L201.5 273.6" stroke="#d0d0d0" stroke-width="4.4"/>
<path d="M257.4 262.8 L266.6 271.6 L282.2 255.6" fill="none" stroke="#d4d4d4" stroke-width="4.4"/>
</svg>
<div id="txt" style="position:absolute;left:0;top:0;width:2286px;height:1524px;will-change:transform">
<span class="t" style='left:42.77px;top:60.00px;font:normal 400 25px/1 "Liberation Sans",sans-serif;color:#3b7850;transform:scaleX(1.1131);-webkit-text-stroke:0.85px currentColor;'>Home</span>
<span class="t" style='left:168.47px;top:60.00px;font:normal 400 25px/1 "Liberation Sans",sans-serif;color:#e3f0e6;transform:scaleX(1.1671);-webkit-text-stroke:0.85px currentColor;'>Insert</span>
<span class="t" style='left:294.62px;top:60.00px;font:normal 400 25px/1 "Liberation Sans",sans-serif;color:#e3f0e6;transform:scaleX(1.0921);-webkit-text-stroke:0.85px currentColor;'>Page Layout</span>
<span class="t" style='left:500.78px;top:60.00px;font:normal 400 25px/1 "Liberation Sans",sans-serif;color:#e3f0e6;transform:scaleX(1.1113);-webkit-text-stroke:0.85px currentColor;'>Formulas</span>
<span class="t" style='left:668.79px;top:60.00px;font:normal 400 25px/1 "Liberation Sans",sans-serif;color:#e3f0e6;transform:scaleX(1.1060);-webkit-text-stroke:0.85px currentColor;'>Data</span>
<span class="t" style='left:778.66px;top:60.00px;font:normal 400 25px/1 "Liberation Sans",sans-serif;color:#e3f0e6;transform:scaleX(1.0690);-webkit-text-stroke:0.85px currentColor;'>Review</span>
<span class="t" style='left:920.80px;top:60.00px;font:normal 400 25px/1 "Liberation Sans",sans-serif;color:#e3f0e6;transform:scaleX(1.0698);-webkit-text-stroke:0.85px currentColor;'>View</span>
<span class="t" style='left:1037.68px;top:60.00px;font:normal 400 25px/1 "Liberation Sans",sans-serif;color:#eef7ef;transform:scaleX(1.1181);-webkit-text-stroke:0.85px currentColor;'>Chart Design</span>
<span class="t" style='left:1252.45px;top:60.00px;font:normal 400 25px/1 "Liberation Sans",sans-serif;color:#eef7ef;transform:scaleX(1.1239);-webkit-text-stroke:0.85px currentColor;'>Format</span>
<span class="t" style='left:1361.82px;top:11.20px;font:normal 400 25.5px/1 "Liberation Sans",sans-serif;color:#dcebdf;transform:scaleX(1.0923);-webkit-text-stroke:0.35px currentColor;'>Book2</span>
<span class="t" style='left:35.90px;top:185.30px;font:normal 400 19.5px/1 "Liberation Sans",sans-serif;color:#8c8c8c;transform:scaleX(1.1037);-webkit-text-stroke:0.22px currentColor;'>Paste</span>
<span class="t" style='left:175.00px;top:111.20px;font:normal 400 19.5px/1 "Liberation Sans",sans-serif;color:#161616;transform:scaleX(1.0670);-webkit-text-stroke:0.22px currentColor;'>Cut</span>
<span class="t" style='left:175.00px;top:157.40px;font:normal 400 19.5px/1 "Liberation Sans",sans-serif;color:#161616;transform:scaleX(1.0705);-webkit-text-stroke:0.22px currentColor;'>Copy</span>
<span class="t" style='left:173.88px;top:203.50px;font:normal 400 19.5px/1 "Liberation Sans",sans-serif;color:#8c8c8c;transform:scaleX(1.1249);-webkit-text-stroke:0.22px currentColor;'>Format</span>
<span class="t" style='left:299.90px;top:124.40px;font:normal 400 23px/1 "Liberation Sans",sans-serif;color:#161616;transform:scaleX(1.1006);-webkit-text-stroke:0.22px currentColor;'>Calibri (Body)</span>
<span class="t" style='left:517.82px;top:124.40px;font:normal 400 23px/1 "Liberation Sans",sans-serif;color:#161616;transform:scaleX(1.1818);-webkit-text-stroke:0.22px currentColor;'>9</span>
<span class="t" style='left:310.68px;top:182.90px;font:normal 700 28px/1 "Liberation Sans",sans-serif;color:#333;transform:scaleX(0.9222);'>B</span>
<span class="t" style='left:370.38px;top:182.90px;font:italic 700 28px/1 "Liberation Serif",serif;color:#333;transform:scaleX(1.3846);'>I</span>
<span class="t" style='left:425.87px;top:183.50px;font:normal 400 26px/1 "Liberation Sans",sans-serif;color:#333;transform:scaleX(1.0667);'>U</span>
<span class="t" style='left:633.70px;top:121.20px;font:normal 400 29px/1 "Liberation Sans",sans-serif;color:#333;transform:scaleX(1.0150);'>A</span>
<span class="t" style='left:693.00px;top:125.20px;font:normal 400 24.5px/1 "Liberation Sans",sans-serif;color:#333;transform:scaleX(1.0000);'>A</span>
<span class="t" style='left:678.40px;top:177.70px;font:normal 400 26.5px/1 "Liberation Sans",sans-serif;color:#333;transform:scaleX(1.0889);'>A</span>
<span class="t" style='left:1168.90px;top:127.00px;font:normal 400 20px/1 "Liberation Sans",sans-serif;color:#8c8c8c;transform:scaleX(1.1043);-webkit-text-stroke:0.22px currentColor;'>Wrap Text</span>
<span class="t" style='left:1167.78px;top:186.70px;font:normal 400 20px/1 "Liberation Sans",sans-serif;color:#8c8c8c;transform:scaleX(1.1166);-webkit-text-stroke:0.22px currentColor;'>Merge &amp; Center</span>
<span class="t" style='left:1401.96px;top:124.60px;font:normal 400 23.5px/1 "Liberation Sans",sans-serif;color:#7c7c7c;transform:scaleX(1.0444);'>General</span>
<span class="t" style='left:1408.80px;top:180.60px;font:normal 400 31px/1 "Liberation Sans",sans-serif;color:#a2a2a2;transform:scaleX(0.8118);'>$</span>
<span class="t" style='left:1483.06px;top:181.50px;font:normal 400 31px/1 "Liberation Sans",sans-serif;color:#a2a2a2;transform:scaleX(0.9385);'>%</span>
<span class="t" style='left:1547.00px;top:137.20px;font:normal 700 72px/1 "Liberation Serif",serif;color:#a6a6a6;transform:scaleX(0.7500);'>,</span>
<span class="t" style='left:1624.50px;top:180.80px;font:normal 400 16px/1 "Liberation Sans",sans-serif;color:#9c9c9c;transform:scaleX(1.0044);'>.0</span>
<span class="t" style='left:1614.34px;top:196.60px;font:normal 400 16px/1 "Liberation Sans",sans-serif;color:#9c9c9c;transform:scaleX(1.0589);'>.00</span>
<span class="t" style='left:1671.93px;top:180.80px;font:normal 400 16px/1 "Liberation Sans",sans-serif;color:#9c9c9c;transform:scaleX(1.0682);'>.00</span>
<span class="t" style='left:1681.97px;top:196.60px;font:normal 400 16px/1 "Liberation Sans",sans-serif;color:#9c9c9c;transform:scaleX(1.0285);'>.0</span>
<span class="t" style='left:1745.59px;top:184.80px;font:normal 400 20.5px/1 "Liberation Sans",sans-serif;color:#8c8c8c;transform:scaleX(1.1117);-webkit-text-stroke:0.22px currentColor;'>Conditional</span>
<span class="t" style='left:1747.89px;top:208.30px;font:normal 400 20.5px/1 "Liberation Sans",sans-serif;color:#8c8c8c;transform:scaleX(1.1080);-webkit-text-stroke:0.22px currentColor;'>Formatting</span>
<span class="t" style='left:1881.62px;top:184.80px;font:normal 400 20.5px/1 "Liberation Sans",sans-serif;color:#8c8c8c;transform:scaleX(1.0790);-webkit-text-stroke:0.22px currentColor;'>Format</span>
<span class="t" style='left:1876.00px;top:208.30px;font:normal 400 20.5px/1 "Liberation Sans",sans-serif;color:#8c8c8c;transform:scaleX(1.0796);-webkit-text-stroke:0.22px currentColor;'>as Table</span>
<span class="t" style='left:2001.42px;top:184.80px;font:normal 400 20.5px/1 "Liberation Sans",sans-serif;color:#8c8c8c;transform:scaleX(1.0782);-webkit-text-stroke:0.22px currentColor;'>Cell</span>
<span class="t" style='left:1991.00px;top:208.30px;font:normal 400 20.5px/1 "Liberation Sans",sans-serif;color:#8c8c8c;transform:scaleX(1.0616);-webkit-text-stroke:0.22px currentColor;'>Styles</span>
<span class="t" style='left:2119.90px;top:184.80px;font:normal 400 20.5px/1 "Liberation Sans",sans-serif;color:#161616;transform:scaleX(1.1033);-webkit-text-stroke:0.22px currentColor;'>Insert</span>
<span class="t" style='left:2219.91px;top:184.80px;font:normal 400 20.5px/1 "Liberation Sans",sans-serif;color:#161616;transform:scaleX(1.0889);-webkit-text-stroke:0.22px currentColor;'>Delete</span>
<span class="t" style='left:1800.00px;top:146.00px;font:normal 400 24px/1 "Liberation Sans",sans-serif;color:#a8a8a8;transform:scaleX(1.1923);'>≠</span>
<span class="t" style='left:19.68px;top:254.60px;font:normal 400 24.5px/1 "Liberation Sans",sans-serif;color:#111;transform:scaleX(1.0239);'>Chart 2</span>
<span class="t" style='left:315.60px;top:245.40px;font:italic 400 33px/1 "Liberation Serif",serif;color:#b2b2b2;transform:scaleX(1.1585);'>fx</span>
<span class="t" style='left:270.30px;top:315.20px;font:normal 400 33.5px/1 "Liberation Sans",sans-serif;color:#565656;transform:scaleX(0.9000);-webkit-text-stroke:0.5px currentColor;'>A</span>
<span class="t" style='left:688.59px;top:315.20px;font:normal 400 33.5px/1 "Liberation Sans",sans-serif;color:#565656;transform:scaleX(0.8526);-webkit-text-stroke:0.5px currentColor;'>B</span>
<span class="t" style='left:1104.04px;top:315.20px;font:normal 400 33.5px/1 "Liberation Sans",sans-serif;color:#565656;transform:scaleX(0.8591);-webkit-text-stroke:0.5px currentColor;'>C</span>
<span class="t" style='left:1518.90px;top:315.20px;font:normal 400 33.5px/1 "Liberation Sans",sans-serif;color:#565656;transform:scaleX(0.9000);-webkit-text-stroke:0.5px currentColor;'>D</span>
<span class="t" style='left:1937.53px;top:315.20px;font:normal 400 33.5px/1 "Liberation Sans",sans-serif;color:#565656;transform:scaleX(0.7368);-webkit-text-stroke:0.5px currentColor;'>E</span>
<span class="t" style='left:26.00px;top:376.60px;font:normal 400 33px/1 "Liberation Sans",sans-serif;color:#565656;transform:scaleX(1.0000);-webkit-text-stroke:0.5px currentColor;'>1</span>
<span class="t" style='left:27.56px;top:428.60px;font:normal 400 33px/1 "Liberation Sans",sans-serif;color:#565656;transform:scaleX(0.9375);-webkit-text-stroke:0.5px currentColor;'>2</span>
<span class="t" style='left:27.56px;top:480.60px;font:normal 400 33px/1 "Liberation Sans",sans-serif;color:#565656;transform:scaleX(0.9375);-webkit-text-stroke:0.5px currentColor;'>3</span>
<span class="t" style='left:28.50px;top:532.60px;font:normal 400 33px/1 "Liberation Sans",sans-serif;color:#565656;transform:scaleX(0.8333);-webkit-text-stroke:0.5px currentColor;'>4</span>
<span class="t" style='left:27.56px;top:584.60px;font:normal 400 33px/1 "Liberation Sans",sans-serif;color:#565656;transform:scaleX(0.9375);-webkit-text-stroke:0.5px currentColor;'>5</span>
<span class="t" style='left:27.56px;top:636.60px;font:normal 400 33px/1 "Liberation Sans",sans-serif;color:#565656;transform:scaleX(0.9375);-webkit-text-stroke:0.5px currentColor;'>6</span>
<span class="t" style='left:27.56px;top:688.60px;font:normal 400 33px/1 "Liberation Sans",sans-serif;color:#565656;transform:scaleX(0.9375);-webkit-text-stroke:0.5px currentColor;'>7</span>
<span class="t" style='left:27.56px;top:740.60px;font:normal 400 33px/1 "Liberation Sans",sans-serif;color:#565656;transform:scaleX(0.9375);-webkit-text-stroke:0.5px currentColor;'>8</span>
<span class="t" style='left:27.56px;top:792.60px;font:normal 400 33px/1 "Liberation Sans",sans-serif;color:#565656;transform:scaleX(0.9375);-webkit-text-stroke:0.5px currentColor;'>9</span>
<span class="t" style='left:14.86px;top:844.60px;font:normal 400 33px/1 "Liberation Sans",sans-serif;color:#565656;transform:scaleX(1.0712);-webkit-text-stroke:0.5px currentColor;'>10</span>
<span class="t" style='left:14.62px;top:896.60px;font:normal 400 33px/1 "Liberation Sans",sans-serif;color:#565656;transform:scaleX(1.1908);-webkit-text-stroke:0.5px currentColor;'>11</span>
<span class="t" style='left:14.79px;top:948.60px;font:normal 400 33px/1 "Liberation Sans",sans-serif;color:#565656;transform:scaleX(1.1033);-webkit-text-stroke:0.5px currentColor;'>12</span>
<span class="t" style='left:14.79px;top:1000.60px;font:normal 400 33px/1 "Liberation Sans",sans-serif;color:#565656;transform:scaleX(1.1033);-webkit-text-stroke:0.5px currentColor;'>13</span>
<span class="t" style='left:14.86px;top:1052.60px;font:normal 400 33px/1 "Liberation Sans",sans-serif;color:#565656;transform:scaleX(1.0712);-webkit-text-stroke:0.5px currentColor;'>14</span>
<span class="t" style='left:14.79px;top:1104.60px;font:normal 400 33px/1 "Liberation Sans",sans-serif;color:#565656;transform:scaleX(1.1033);-webkit-text-stroke:0.5px currentColor;'>15</span>
<span class="t" style='left:14.79px;top:1156.60px;font:normal 400 33px/1 "Liberation Sans",sans-serif;color:#565656;transform:scaleX(1.1033);-webkit-text-stroke:0.5px currentColor;'>16</span>
<span class="t" style='left:14.79px;top:1208.60px;font:normal 400 33px/1 "Liberation Sans",sans-serif;color:#565656;transform:scaleX(1.1033);-webkit-text-stroke:0.5px currentColor;'>17</span>
<span class="t" style='left:14.79px;top:1260.60px;font:normal 400 33px/1 "Liberation Sans",sans-serif;color:#565656;transform:scaleX(1.1033);-webkit-text-stroke:0.5px currentColor;'>18</span>
<span class="t" style='left:14.79px;top:1312.60px;font:normal 400 33px/1 "Liberation Sans",sans-serif;color:#565656;transform:scaleX(1.1033);-webkit-text-stroke:0.5px currentColor;'>19</span>
<span class="t" style='left:15.96px;top:1364.60px;font:normal 400 33px/1 "Liberation Sans",sans-serif;color:#565656;transform:scaleX(1.0409);-webkit-text-stroke:0.5px currentColor;'>20</span>
<span class="t" style='left:15.93px;top:1416.60px;font:normal 400 33px/1 "Liberation Sans",sans-serif;color:#565656;transform:scaleX(1.0712);-webkit-text-stroke:0.5px currentColor;'>21</span>
<span class="t" style='left:15.93px;top:1468.60px;font:normal 400 33px/1 "Liberation Sans",sans-serif;color:#565656;transform:scaleX(1.0712);-webkit-text-stroke:0.5px currentColor;'>22</span>
<span class="t" style='left:245.58px;top:376.70px;font:normal 700 33px/1 "Liberation Sans",sans-serif;color:#000;transform:scaleX(1.0082);'>Pets</span>
<span class="t" style='left:605.68px;top:376.70px;font:normal 700 33px/1 "Liberation Sans",sans-serif;color:#000;transform:scaleX(1.0187);'>Owners (%)</span>
<span class="t" style='left:250.57px;top:428.60px;font:normal 400 33px/1 "Liberation Sans",sans-serif;color:#0c0c0c;transform:scaleX(0.9299);-webkit-text-stroke:0.45px currentColor;'>Cats</span>
<span class="t" style='left:244.33px;top:480.60px;font:normal 400 33px/1 "Liberation Sans",sans-serif;color:#0c0c0c;transform:scaleX(0.9861);-webkit-text-stroke:0.45px currentColor;'>Dogs</span>
<span class="t" style='left:242.93px;top:532.60px;font:normal 400 33px/1 "Liberation Sans",sans-serif;color:#0c0c0c;transform:scaleX(1.0346);-webkit-text-stroke:0.45px currentColor;'>Birds</span>
<span class="t" style='left:220.99px;top:584.60px;font:normal 400 33px/1 "Liberation Sans",sans-serif;color:#0c0c0c;transform:scaleX(1.0050);-webkit-text-stroke:0.45px currentColor;'>Reptiles</span>
<span class="t" style='left:160.87px;top:636.60px;font:normal 400 33px/1 "Liberation Sans",sans-serif;color:#0c0c0c;transform:scaleX(1.0279);-webkit-text-stroke:0.45px currentColor;'>Small Mammals</span>
<span class="t" style='left:495.93px;top:428.60px;font:normal 400 33px/1 "Liberation Sans",sans-serif;color:#0c0c0c;transform:scaleX(1.0741);-webkit-text-stroke:0.45px currentColor;'>38</span>
<span class="t" style='left:496.50px;top:480.60px;font:normal 400 33px/1 "Liberation Sans",sans-serif;color:#0c0c0c;transform:scaleX(1.0522);-webkit-text-stroke:0.45px currentColor;'>41</span>
<span class="t" style='left:496.38px;top:532.60px;font:normal 400 33px/1 "Liberation Sans",sans-serif;color:#0c0c0c;transform:scaleX(1.0614);-webkit-text-stroke:0.45px currentColor;'>16</span>
<span class="t" style='left:495.94px;top:584.60px;font:normal 400 33px/1 "Liberation Sans",sans-serif;color:#0c0c0c;transform:scaleX(1.0625);-webkit-text-stroke:0.45px currentColor;'>3</span>
<span class="t" style='left:495.94px;top:636.60px;font:normal 400 33px/1 "Liberation Sans",sans-serif;color:#0c0c0c;transform:scaleX(1.0625);-webkit-text-stroke:0.45px currentColor;'>2</span>
<span class="t" style='left:1345.91px;top:560.60px;font:normal 400 40px/1 "Liberation Sans",sans-serif;color:#5a5a5a;transform:scaleX(1.0314);'>Pet Owners</span>
<span class="t" style='left:1144.70px;top:1308.40px;font:normal 400 24px/1 "Liberation Sans",sans-serif;color:#5a5a5a;transform:scaleX(0.9969);'>Cats</span>
<span class="t" style='left:1247.00px;top:1308.40px;font:normal 400 24px/1 "Liberation Sans",sans-serif;color:#5a5a5a;transform:scaleX(0.9995);'>Dogs</span>
<span class="t" style='left:1356.54px;top:1308.40px;font:normal 400 24px/1 "Liberation Sans",sans-serif;color:#5a5a5a;transform:scaleX(1.0563);'>Birds</span>
<span class="t" style='left:1466.85px;top:1308.40px;font:normal 400 24px/1 "Liberation Sans",sans-serif;color:#5a5a5a;transform:scaleX(1.0548);'>Reptiles</span>
<span class="t" style='left:1611.72px;top:1308.40px;font:normal 400 24px/1 "Liberation Sans",sans-serif;color:#5a5a5a;transform:scaleX(1.0797);'>Small Mammals</span>
</div>
</body></html>
